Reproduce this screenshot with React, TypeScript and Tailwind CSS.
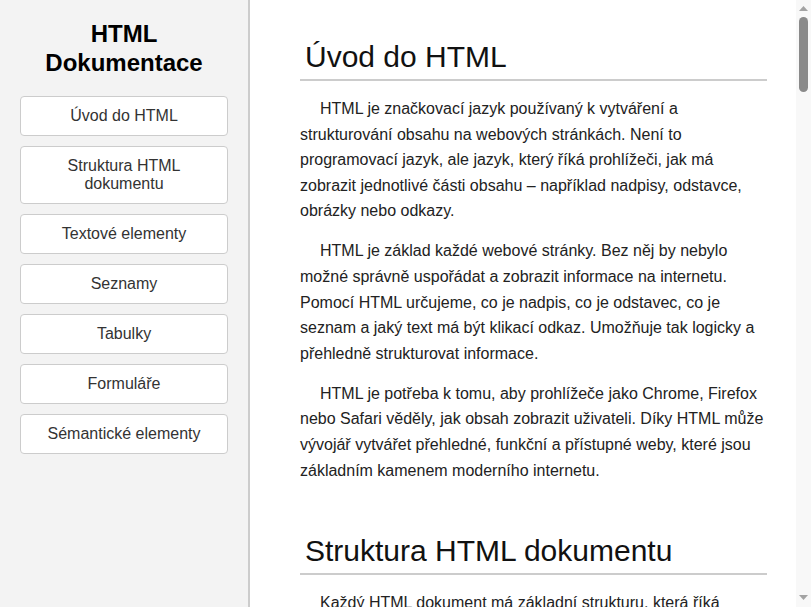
import React from "react";

const nav = [
  "Úvod do HTML",
  "Struktura HTML dokumentu",
  "Textové elementy",
  "Seznamy",
  "Tabulky",
  "Formuláře",
  "Sémantické elementy",
];

const sections: { title: string; paras: string[] }[] = [
  {
    title: "Úvod do HTML",
    paras: [
      "HTML je značkovací jazyk používaný k vytváření a strukturování obsahu na webových stránkách. Není to programovací jazyk, ale jazyk, který říká prohlížeči, jak má zobrazit jednotlivé části obsahu – například nadpisy, odstavce, obrázky nebo odkazy.",
      "HTML je základ každé webové stránky. Bez něj by nebylo možné správně uspořádat a zobrazit informace na internetu. Pomocí HTML určujeme, co je nadpis, co je odstavec, co je seznam a jaký text má být klikací odkaz. Umožňuje tak logicky a přehledně strukturovat informace.",
      "HTML je potřeba k tomu, aby prohlížeče jako Chrome, Firefox nebo Safari věděly, jak obsah zobrazit uživateli. Díky HTML může vývojář vytvářet přehledné, funkční a přístupné weby, které jsou základním kamenem moderního internetu.",
    ],
  },
  {
    title: "Struktura HTML dokumentu",
    paras: [
      "Každý HTML dokument má základní strukturu, která říká prohlížeči, jak má stránku zpracovat. Dokument začíná deklarací <!DOCTYPE html>, po které následuje kořenový element <html>, jenž obsahuje celou stránku.",
      "Uvnitř elementu <html> najdeme dvě hlavní části: <head> a <body>. Hlavička obsahuje informace o dokumentu, jako je název stránky, kódování znaků nebo odkazy na styly. Tělo obsahuje veškerý obsah, který uživatel na stránce vidí.",
    ],
  },
];

function Scrollbar() {
  return (
    <div className="flex h-full w-[15px] shrink-0 flex-col items-center bg-[#f8f8f8]">
      <svg width="9" height="5" viewBox="0 0 9 5" className="mt-[6px]">
        <polygon points="4.5,0 9,5 0,5" fill="#a3a3a3" />
      </svg>
      <div className="mt-[6px] h-[75px] w-[9px] rounded-full bg-[#8a8a8a]" />
      <div className="flex-1" />
      <svg width="9" height="5" viewBox="0 0 9 5" className="mb-[7px]">
        <polygon points="0,0 9,0 4.5,5" fill="#a3a3a3" />
      </svg>
    </div>
  );
}

export default function App() {
  return (
    <div
      className="flex h-screen w-full overflow-hidden bg-white"
      style={{ fontFamily: '"Liberation Sans", Arial, sans-serif' }}
    >
      <aside className="h-full w-[250px] shrink-0 border-r-2 border-[#cccccc] bg-[#f3f3f3] px-[20px] pt-[20px]">
        <h2 className="mb-[18px] text-center text-[24px] font-bold leading-[28.8px] text-black">
          HTML
          <br />
          Dokumentace
        </h2>
        <nav className="flex flex-col gap-[10px]">
          {nav.map((n) => (
            <a
              key={n}
              href="#"
              className="block rounded-[4px] border border-[#cccccc] bg-white px-[10px] py-[10px] text-center text-[16px] leading-[18px] text-[#333333]"
            >
              {n}
            </a>
          ))}
        </nav>
      </aside>
      <main className="flex h-full min-w-0 flex-1">
        <div className="h-full min-w-0 flex-1 overflow-hidden">
          <div className="flex flex-col gap-[36px] pl-[50px] pr-[29px] pt-[39px]">
            {sections.map((s) => (
              <section key={s.title}>
                <h1 className="mb-[15px] border-b-2 border-[#cccccc] pb-[5px] pl-[5px] text-[30px] font-normal leading-[35px] text-[#111111]">
                  {s.title}
                </h1>
                {s.paras.map((p, i) => (
                  <p
                    key={i}
                    className="mb-[14.4px] indent-[20px] text-[16px] leading-[1.6] text-[#222222]"
                  >
                    {p}
                  </p>
                ))}
              </section>
            ))}
          </div>
        </div>
        <Scrollbar />
      </main>
    </div>
  );
}
